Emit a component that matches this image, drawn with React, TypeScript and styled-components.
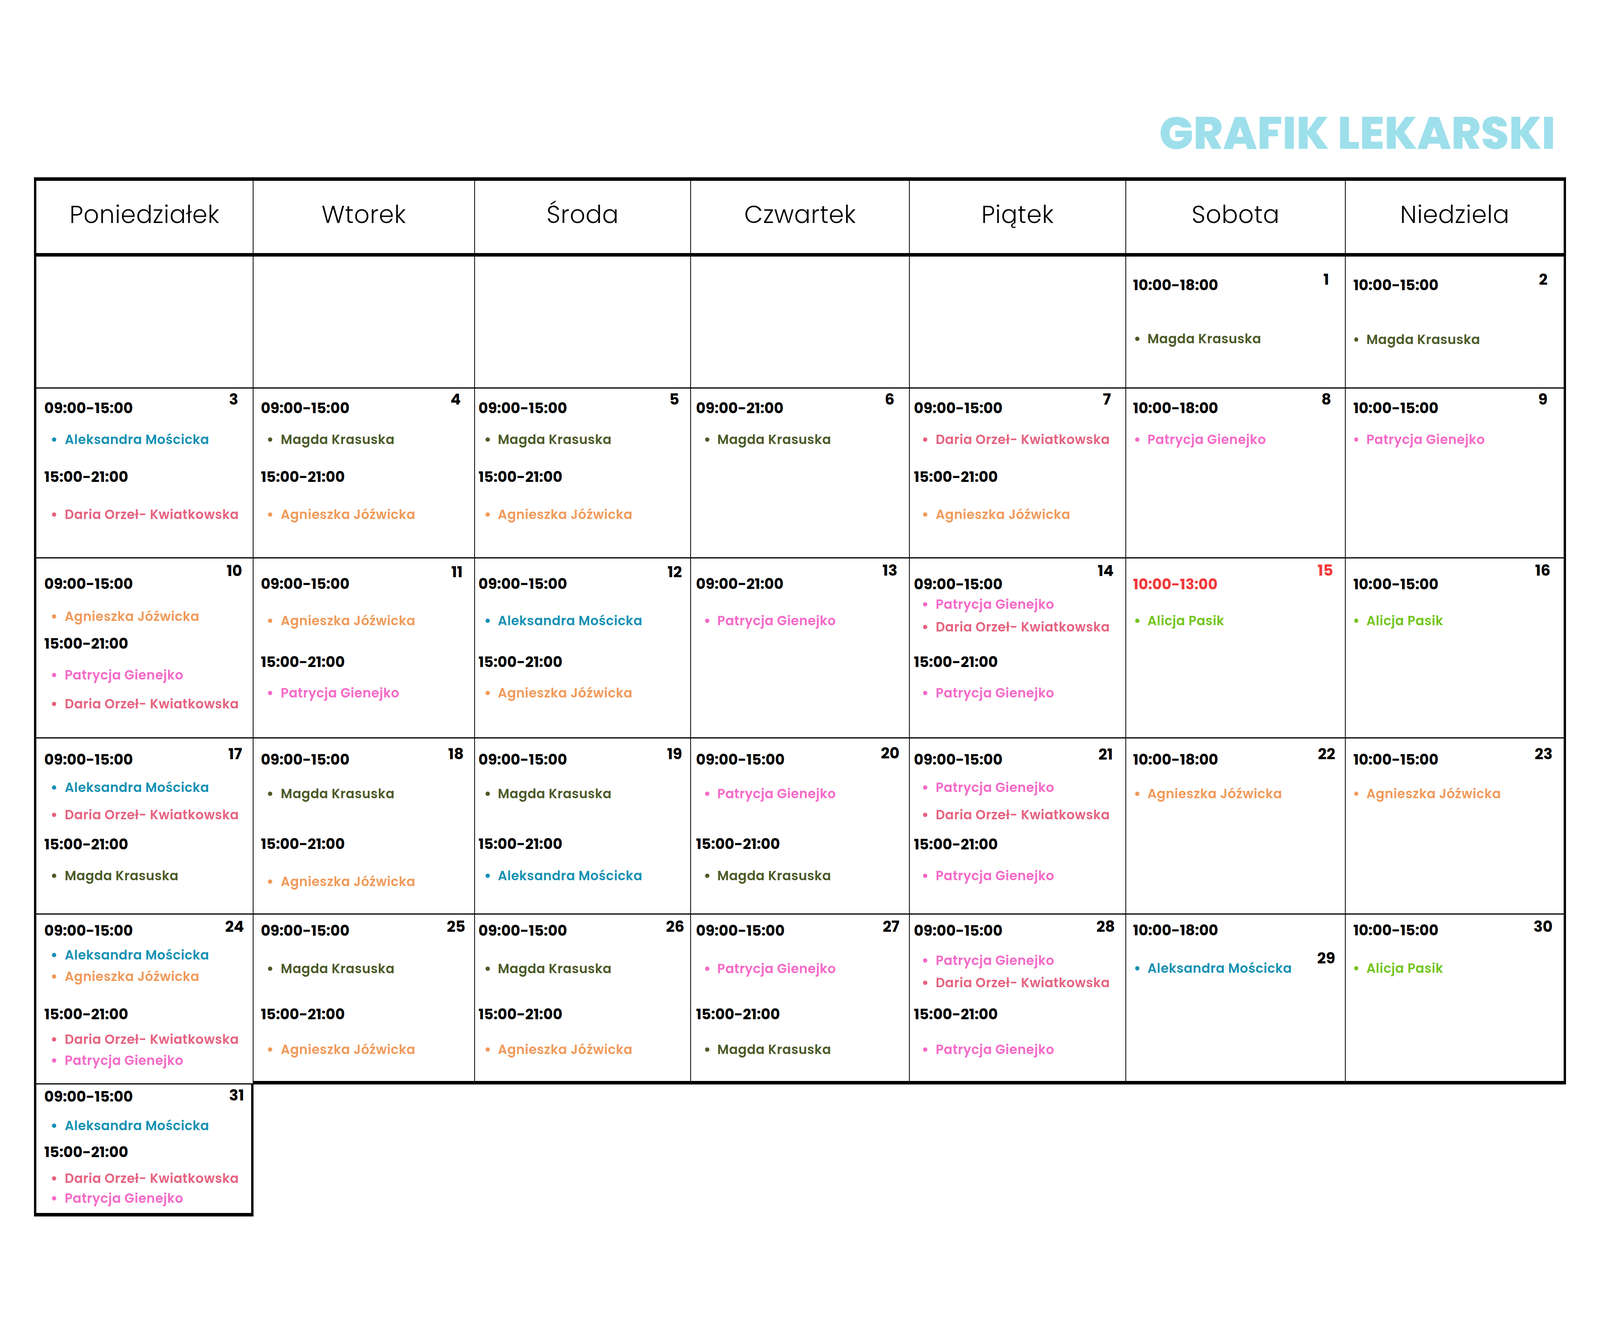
import React, { useEffect, useState } from "react";
import styled, { createGlobalStyle } from "styled-components";

const GlobalStyle = createGlobalStyle`
  * { box-sizing: border-box; }
  html, body { margin: 0; padding: 0; background: #ffffff; overflow: hidden; }
  body { font-family: Poppins, Inter, "Noto Sans", "Liberation Sans", sans-serif; }
`;

// the sheet is drawn on a 6000 x 3375 design grid; horizontal sizes are zoomed
// to the window width, vertical sizes are stretched by --k to the window height
const DESIGN_WIDTH = 6000;
const DESIGN_HEIGHT = 3375;
const COLUMNS = [824, 830, 811, 820, 811, 824, 826];
const ROWS = [203, 338, 435, 461, 451, 435, 338];
const THICK = 9;
const THIN = 3;
const LINE = 50;

const v = (px: number) => `calc(${px}px * var(--k, 1))`;

const DAYS = ["Poniedziałek", "Wtorek", "Środa", "Czwartek", "Piątek", "Sobota", "Niedziela"];

// left offsets per column, from the inner edge of the cell
const INDENTS = [
  { time: 30, bullet: 59, name: 107 },
  { time: 27, bullet: 54, name: 102 },
  { time: 13, bullet: 40, name: 86 },
  { time: 18, bullet: 52, name: 98 },
  { time: 15, bullet: 49, name: 97 },
  { time: 26, bullet: 34, name: 80 },
  { time: 28, bullet: 31, name: 77 },
];

const DOCTORS: Record<string, { name: string; color: string }> = {
  A: { name: "Aleksandra Mościcka", color: "#1591b3" },
  M: { name: "Magda Krasuska", color: "#4b5a28" },
  D: { name: "Daria Orzeł- Kwiatkowska", color: "#e6627f" },
  J: { name: "Agnieszka Jóźwicka", color: "#f09a5a" },
  P: { name: "Patrycja Gienejko", color: "#f569c8" },
  L: { name: "Alicja Pasik", color: "#72c51c" },
};

type Entry = [string, number]; // time text or doctor key, centre y in the cell
interface Day {
  day: number;
  num: [number, number]; // centre y, right gap
  lines: Entry[];
  red?: boolean;
}

const M1 = "09:00-15:00";
const M2 = "15:00-21:00";
const FULL = "09:00-21:00";
const SAT = "10:00-18:00";
const SUN = "10:00-15:00";

const WEEKS: (Day | null)[][] = [
  [
    null, null, null, null, null,
    { day: 1, num: [59, 60], lines: [[SAT, 73], ["M", 211]] },
    { day: 2, num: [59, 61], lines: [[SUN, 73], ["M", 213]] },
  ],
  [
    { day: 3, num: [28, 55], lines: [[M1, 50], ["A", 131], [M2, 226], ["D", 323]] },
    { day: 4, num: [28, 50], lines: [[M1, 50], ["M", 131], [M2, 226], ["J", 323]] },
    { day: 5, num: [28, 42], lines: [[M1, 50], ["M", 131], [M2, 226], ["J", 323]] },
    { day: 6, num: [28, 55], lines: [[FULL, 50], ["M", 131]] },
    { day: 7, num: [28, 54], lines: [[M1, 50], ["D", 131], [M2, 226], ["J", 323]] },
    { day: 8, num: [28, 52], lines: [[SAT, 50], ["P", 131]] },
    { day: 9, num: [28, 61], lines: [[SUN, 50], ["P", 131]] },
  ],
  [
    { day: 10, num: [32, 40], lines: [[M1, 65], ["J", 149], [M2, 218], ["P", 299], ["D", 373]] },
    { day: 11, num: [35, 43], lines: [[M1, 65], ["J", 160], [M2, 265], ["P", 345]] },
    { day: 12, num: [35, 32], lines: [[M1, 65], ["A", 160], [M2, 265], ["J", 345]] },
    { day: 13, num: [31, 44], lines: [[FULL, 65], ["P", 160]] },
    { day: 14, num: [32, 44], lines: [[M1, 66], ["P", 118], ["D", 176], [M2, 265], ["P", 345]] },
    { day: 15, num: [31, 45], lines: [["10:00-13:00", 66], ["L", 160]], red: true },
    { day: 16, num: [31, 50], lines: [[SUN, 66], ["L", 160]] },
  ],
  [
    { day: 17, num: [40, 40], lines: [[M1, 54], ["A", 126], ["D", 196], [M2, 271], ["M", 352]] },
    { day: 18, num: [40, 39], lines: [[M1, 54], ["M", 142], [M2, 270], ["J", 367]] },
    { day: 19, num: [40, 31], lines: [[M1, 54], ["M", 142], [M2, 270], ["A", 352]] },
    { day: 20, num: [38, 36], lines: [[M1, 54], ["P", 142], [M2, 270], ["M", 352]] },
    { day: 21, num: [41, 47], lines: [[M1, 54], ["P", 126], ["D", 196], [M2, 271], ["P", 352]] },
    { day: 22, num: [40, 37], lines: [[SAT, 54], ["J", 142]] },
    { day: 23, num: [40, 42], lines: [[SUN, 54], ["J", 142]] },
  ],
  [
    { day: 24, num: [31, 33], lines: [[M1, 41], ["A", 104], ["J", 159], [M2, 255], ["D", 320], ["P", 374]] },
    { day: 25, num: [31, 33], lines: [[M1, 41], ["M", 139], [M2, 255], ["J", 346]] },
    { day: 26, num: [31, 23], lines: [[M1, 41], ["M", 139], [M2, 255], ["J", 346]] },
    { day: 27, num: [31, 36], lines: [[M1, 41], ["P", 139], [M2, 255], ["M", 346]] },
    { day: 28, num: [31, 39], lines: [[M1, 41], ["P", 118], ["D", 175], [M2, 255], ["P", 346]] },
    { day: 29, num: [112, 37], lines: [[SAT, 40], ["A", 138]] },
    { day: 30, num: [31, 42], lines: [[SUN, 40], ["L", 138]] },
  ],
  [{ day: 31, num: [28, 27], lines: [[M1, 31], ["A", 106], [M2, 173], ["D", 241], ["P", 292]] }],
];

const Page = styled.div`
  width: ${DESIGN_WIDTH}px;
  height: ${v(DESIGN_HEIGHT)};
  overflow: hidden;
  padding-left: 127px;
  padding-top: calc(341.5px * var(--k, 1) - 85px);
  background: #ffffff;
`;

const Title = styled.h1`
  margin: 0;
  width: ${COLUMNS.reduce((a, b) => a + b, 0)}px;
  padding-right: 40px;
  text-align: right;
  font-weight: 800;
  font-size: 169px;
  line-height: 170px;
  color: #9ddfeb;
  white-space: nowrap;
`;

const Calendar = styled.div`
  margin-top: calc(112.5px * var(--k, 1) - 85px);
  display: grid;
  grid-template-columns: ${COLUMNS.map((c) => `${c}px`).join(" ")};
  grid-template-rows: ${ROWS.map((r) => v(r)).join(" ")};
`;

const HeaderCell = styled.div<{ $col: number }>`
  display: flex;
  align-items: center;
  justify-content: center;
  padding-bottom: ${v(11)};
  border-top: ${v(THICK)} solid #000;
  border-bottom: ${v(THICK)} solid #000;
  border-left: ${(p) => (p.$col === 0 ? THICK : 0)}px solid #000;
  border-right: ${(p) => (p.$col === 6 ? THICK : THIN)}px solid #000;
  font-weight: 300;
  font-size: 91px;
  letter-spacing: 1px;
  line-height: 100px;
  color: #000;
  white-space: nowrap;
`;

const Cell = styled.div<{ $col: number; $row: number }>`
  position: relative;
  display: flex;
  flex-direction: column;
  border-left: ${(p) => (p.$col === 0 ? THICK : 0)}px solid #000;
  border-right: ${(p) => (p.$col === 6 || p.$row === 6 ? THICK : THIN)}px solid #000;
  border-bottom: ${(p) => v(p.$row === 6 || (p.$row === 5 && p.$col !== 0) ? THICK : THIN)}
    solid #000;
`;

// $dy: distance from the previous line centre (or the cell top), $lift: what the boxes take up
const Line = styled.div<{ $dy: number; $lift: number; $indent: number }>`
  flex: none;
  display: flex;
  align-items: center;
  height: ${LINE}px;
  margin-top: calc(${(p) => p.$dy}px * var(--k, 1) - ${(p) => p.$lift}px);
  padding-left: ${(p) => p.$indent}px;
  white-space: nowrap;
`;

const Time = styled.span<{ $red?: boolean }>`
  font-weight: 700;
  font-size: 55px;
  line-height: ${LINE}px;
  color: ${(p) => (p.$red ? "#f23a3a" : "#000")};
`;

const Bullet = styled.span<{ $color: string; $gap: number }>`
  flex: none;
  width: 16px;
  height: 16px;
  border-radius: 50%;
  background: ${(p) => p.$color};
  margin-right: ${(p) => p.$gap}px;
`;

const Name = styled.span<{ $color: string }>`
  font-weight: 600;
  font-size: 48px;
  letter-spacing: 1px;
  line-height: ${LINE}px;
  color: ${(p) => p.$color};
`;

const DayNumber = styled.span<{ $y: number; $right: number; $red?: boolean }>`
  position: absolute;
  top: calc(${(p) => p.$y}px * var(--k, 1) - ${LINE / 2}px);
  right: ${(p) => p.$right}px;
  font-weight: 700;
  font-size: 57px;
  line-height: ${LINE}px;
  color: ${(p) => (p.$red ? "#f23a3a" : "#000")};
`;

function DayCell({ data, col, row }: { data: Day | null; col: number; row: number }) {
  const indent = INDENTS[col];
  let prev = 0;
  return (
    <Cell $col={col} $row={row}>
      {data &&
        data.lines.map(([value, y], i) => {
          const dy = y - prev;
          const lift = i === 0 ? LINE / 2 : LINE;
          prev = y;
          const doctor = DOCTORS[value];
          if (!doctor) {
            return (
              <Line key={i} $dy={dy} $lift={lift} $indent={indent.time}>
                <Time $red={data.red}>{value}</Time>
              </Line>
            );
          }
          return (
            <Line key={i} $dy={dy} $lift={lift} $indent={indent.bullet}>
              <Bullet $color={doctor.color} $gap={indent.name - indent.bullet - 16} />
              <Name $color={doctor.color}>{doctor.name}</Name>
            </Line>
          );
        })}
      {data && (
        <DayNumber $y={data.num[0]} $right={data.num[1]} $red={data.red}>
          {data.day}
        </DayNumber>
      )}
    </Cell>
  );
}

function useFit() {
  const measure = () => {
    const root = document.documentElement;
    const sx = root.clientWidth / DESIGN_WIDTH;
    const sy = root.clientHeight / DESIGN_HEIGHT;
    return { zoom: sx, k: sy / sx };
  };
  const [fit, setFit] = useState(measure);
  useEffect(() => {
    const onResize = () => setFit(measure());
    window.addEventListener("resize", onResize);
    return () => window.removeEventListener("resize", onResize);
  }, []);
  return fit;
}

export default function App() {
  const { zoom, k } = useFit();
  return (
    <>
      <GlobalStyle />
      <Page style={{ zoom, ["--k" as string]: k } as React.CSSProperties}>
        <Title>GRAFIK LEKARSKI</Title>
        <Calendar>
          {DAYS.map((d, i) => (
            <HeaderCell key={d} $col={i}>
              {d}
            </HeaderCell>
          ))}
          {WEEKS.map((week, r) =>
            week.map((data, c) => (
              <DayCell key={`${r}-${c}`} data={data} col={c} row={r + 1} />
            )),
          )}
        </Calendar>
      </Page>
    </>
  );
}
